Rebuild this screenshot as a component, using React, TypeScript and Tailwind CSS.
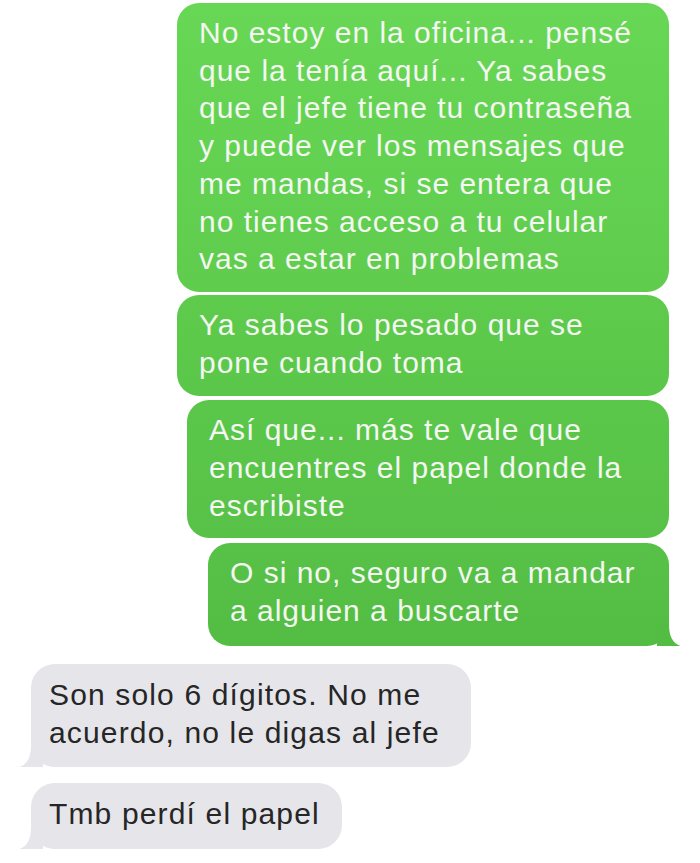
const font = { fontFamily: '"Liberation Sans", Arial, Helvetica, sans-serif' };

interface Bubble {
    lines: string[];
    width: string;
    bg: string;
    mt: string;
    pb: string;
    tail?: boolean;
}

const sent: Bubble[] = [
    {
        lines: [
            "No estoy en la oficina... pensé",
            "que la tenía aquí... Ya sabes",
            "que el jefe tiene tu contraseña",
            "y puede ver los mensajes que",
            "me mandas, si se entera que",
            "no tienes acceso a tu celular",
            "vas a estar en problemas",
        ],
        width: "w-[492px]",
        bg: "bg-linear-to-b from-[#68d755] to-[#5fcc4d]",
        mt: "mt-[3px]",
        pb: "pb-[14px]",
    },
    {
        lines: ["Ya sabes lo pesado que se", "pone cuando toma"],
        width: "w-[492px]",
        bg: "bg-linear-to-b from-[#5ecb4c] to-[#5bc74a]",
        mt: "mt-[3px]",
        pb: "pb-[15px]",
    },
    {
        lines: ["Así que... más te vale que", "encuentres el papel donde la", "escribiste"],
        width: "w-[482px]",
        bg: "bg-linear-to-b from-[#5bc74a] to-[#57c247]",
        mt: "mt-[4px]",
        pb: "pb-[14px]",
    },
    {
        lines: ["O si no, seguro va a mandar", "a alguien a buscarte"],
        width: "w-[461px]",
        bg: "bg-linear-to-b from-[#57c247] to-[#53bd43]",
        mt: "mt-[5px]",
        pb: "pb-[16px]",
        tail: true,
    },
];

const received: Bubble[] = [
    {
        lines: ["Son solo 6 dígitos. No me", "acuerdo, no le digas al jefe"],
        width: "w-[440px]",
        bg: "bg-[#e5e5ea]",
        mt: "mt-[18px]",
        pb: "pb-[16px]",
        tail: true,
    },
    {
        lines: ["Tmb perdí el papel"],
        width: "w-[311px]",
        bg: "bg-[#e5e5ea]",
        mt: "mt-[16px]",
        pb: "pb-[16px]",
        tail: true,
    },
];

export default function App() {
    return (
        <div className="min-h-screen w-[700px] bg-white flex flex-col pb-4" style={font}>
            {/* outgoing (green) */}
            <div className="flex flex-col items-end pr-[31px]">
                {sent.map((b, i) => (
                    <div
                        key={i}
                        className={`relative ${b.width} ${b.bg} ${b.mt} ${b.pb} rounded-[22px] pl-[22px] pt-[11px] text-[30px] leading-[37.7px] tracking-[1px] text-[#f4f6f2]`}
                    >
                        {b.lines.map((l, j) => (
                            <div key={j} className="whitespace-nowrap">
                                {l}
                            </div>
                        ))}
                        {b.tail && (
                            <svg
                                className="absolute bottom-0 right-[-12px] w-[24px] h-[22px]"
                                viewBox="0 0 24 22"
                            >
                                <path d="M0 0 L12 0 C12 13 16 19 23.5 22 L0 22 Z" fill="#53bd43" />
                            </svg>
                        )}
                    </div>
                ))}
            </div>

            {/* incoming (gray) */}
            <div className="flex flex-col items-start pl-[31px]">
                {received.map((b, i) => (
                    <div
                        key={i}
                        className={`relative ${b.width} ${b.bg} ${b.mt} ${b.pb} rounded-[24px] pl-[18px] pt-[12px] text-[30px] leading-[37.7px] tracking-[1.15px] text-[#262626]`}
                    >
                        {b.lines.map((l, j) => (
                            <div key={j} className="whitespace-nowrap">
                                {l}
                            </div>
                        ))}
                        {b.tail && (
                            <svg
                                className="absolute bottom-0 left-[-12px] w-[24px] h-[22px]"
                                viewBox="0 0 24 22"
                            >
                                <path d="M24 0 L12 0 C12 13 8 19 0.5 22 L24 22 Z" fill="#e5e5ea" />
                            </svg>
                        )}
                    </div>
                ))}
            </div>
        </div>
    );
}
